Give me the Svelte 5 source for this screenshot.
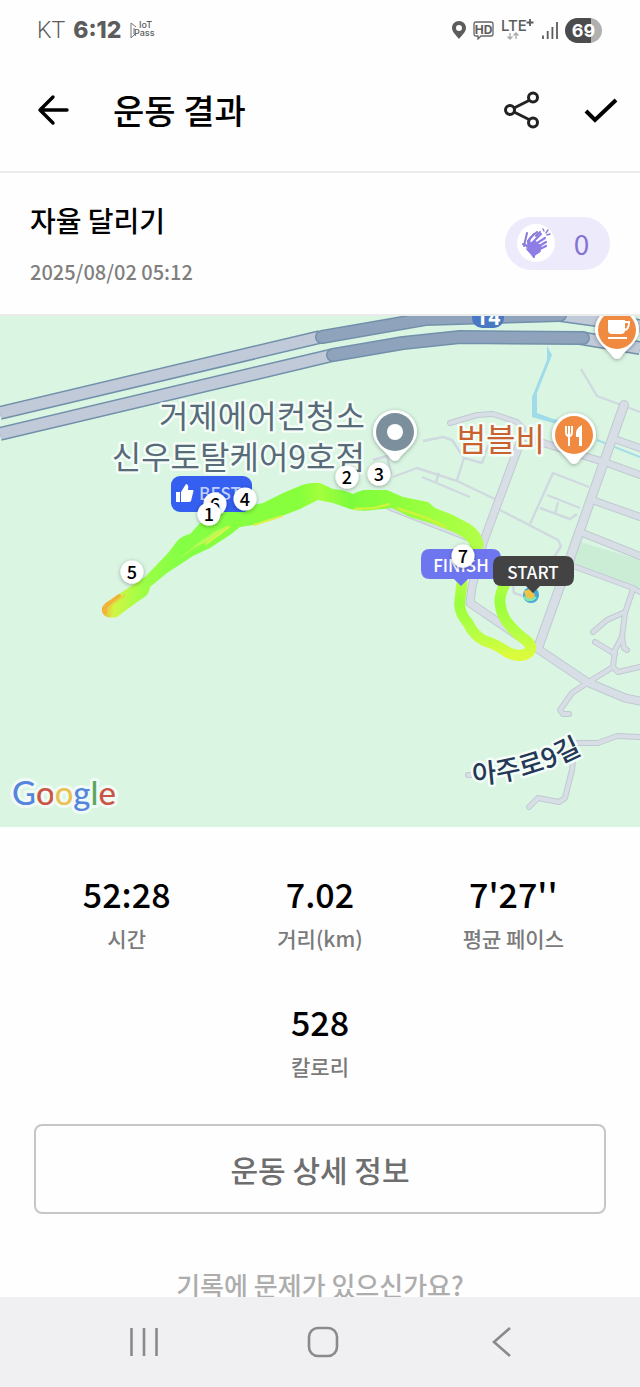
<script>
  const stats = [
    { value: '52:28', label: '시간' },
    { value: '7.02', label: '거리(km)' },
    { value: "7'27''", label: '평균 페이스' },
    { value: '528', label: '칼로리' }
  ];

  // kilometre markers, in drawing order
  const markers = [
    { km: 2, x: 347, y: 161 },
    { km: 3, x: 379, y: 158 },
    { km: 6, x: 215, y: 188 },
    { km: 4, x: 245, y: 183 },
    { km: 1, x: 209, y: 198 },
    { km: 5, x: 132, y: 256 },
    { km: 7, x: 463, y: 240 }
  ];

  const thin_roads = [
    'M581 53L597 80L640 96',
    'M423 125L443 121L452 124L464 142L457 164',
    'M464 142L482 147L488 130L506 133',
    'M393 161L417 152L457 165L497 184',
    'M422 161L470 181',
    'M439 157L436 166',
    'M373 144L387 140L391 158',
    'M500 194L558 224L561 230L553 243',
    'M530 208L553 157L589 171',
    'M547 179L580 192',
    'M558 186L555 198',
    'M540 192L570 203L577 198',
    'M513 270L514 277L523 280'
  ];

  const roads = [
    { d: 'M450 107L477 99L493 98L517 106L523 112L520 127', w: 5 },
    { d: 'M364 177L375 177', w: 5 },
    { d: 'M573 250L633 272L640 276', w: 5 },
    { d: 'M633 273L625 297L622 321L624 332L627 334', w: 5 },
    { d: 'M625 296L607 304L593 316', w: 5 },
    { d: 'M622 321L615 334L613 351L587 367L572 377L560 394L563 398L569 398', w: 5 },
    { d: 'M595 326L615 338', w: 5 },
    { d: 'M613 351L618 356L640 351', w: 5 },
    { d: 'M640 421L617 420L598 427L575 427L572 454L565 482L559 486L538 482L529 491', w: 5 },
    { d: 'M468 459L472 459', w: 5 },
    { d: 'M385 189L393 193L480 227', w: 5 },
    { d: 'M617 124L640 132', w: 7 },
    { d: 'M524 121L607 147L640 159', w: 7 },
    { d: 'M592 184L640 201', w: 7 },
    { d: 'M580 216L640 240', w: 7 },
    { d: 'M520 127L483 227L472 271L470 287L520 321L538 333L587 366L625 382L640 385', w: 8 },
    { d: 'M624 89L573 234L538 332', w: 9 }
  ];

  const highways = [
    { d: 'M0 97L320 21', dark: false },
    { d: 'M0 118L333 39', dark: false },
    { d: 'M560 -1L640 10', dark: false },
    { d: 'M580 22L640 32', dark: false },
    { d: 'M322 21L425 3L560 -1', dark: true },
    { d: 'M333 39L403 27L460 21L583 22', dark: true }
  ];

  const pin = 'M0 -22A22 22 0 0 1 22 0C22 12 8 20 4 27Q0 31 -4 27C-8 20 -22 12 -22 0A22 22 0 0 1 0 -22Z';

  let claps = $state(0);
</script>

<div class="screen">
  <div class="status">
    <span class="carrier">KT</span>
    <span class="clock">6:12</span>
    <svg class="iot" width="28" height="22" viewBox="0 0 28 22">
      <path d="M1 4V19L6 14M1 4L6 8M4 9V15" fill="none" stroke="#777" />
      <text x="9" y="9" font-size="9" font-weight="500">IoT</text>
      <text x="4" y="17" font-size="9" font-weight="500">Pass</text>
    </svg>

    <div class="status-right">
      <svg width="16" height="20" viewBox="0 0 16 20">
        <path fill-rule="evenodd" fill="#5c5c5c" d="M8 1C12 1 15 4 15 8C15 12 11 15 8 19C5 15 1 12 1 8C1 4 4 1 8 1ZM8 5A3 3 0 1 0 8 11A3 3 0 1 0 8 5Z" />
      </svg>
      <svg width="22" height="20" viewBox="0 0 22 20">
        <path d="M3 2H18Q20 2 20 4V14Q20 16 18 16H8L5 19V16H3Q1 16 1 14V4Q1 2 3 2Z" fill="none" stroke="#666" stroke-width="1.3" />
        <text x="10.500" y="13.500" text-anchor="middle" font-size="12" font-weight="700">HD</text>
      </svg>
      <svg width="34" height="24" viewBox="0 0 34 24">
        <text x="0" y="13" font-size="15" font-weight="500">LTE</text>
        <path d="M29 1V8M25.500 4.500H32.500" stroke="#5c5c5c" stroke-width="1.8" />
        <path d="M9 15V21M6.500 18.500L9 21L11.500 18.500M15 21V15M12.500 17.500L15 15L17.500 17.500" fill="none" stroke="#aaa" stroke-width="1.4" />
      </svg>
      <svg width="18" height="20" viewBox="0 0 18 20">
        <path d="M2 19V15.500M6.700 19V11M11.400 19V7M16 19V2" stroke="#5c5c5c" stroke-width="1.8" />
      </svg>
      <span class="battery">69</span>
    </div>
  </div>

  <header>
    <button class="icon" aria-label="뒤로">
      <svg width="36" height="36" viewBox="0 0 36 36">
        <path d="M32 18H5M18 5L5 18L18 31" fill="none" stroke="#000" stroke-width="3.4" stroke-linecap="round" stroke-linejoin="round" />
      </svg>
    </button>
    <h1>운동 결과</h1>
    <button class="icon" aria-label="공유">
      <svg width="40" height="40" viewBox="0 0 40 40">
        <g fill="none" stroke="#222" stroke-width="3">
          <path d="M29 10L13 18M13 22L29 30" />
          <circle cx="9" cy="20" r="4.500" />
          <circle cx="32" cy="7.500" r="4.500" />
          <circle cx="32" cy="32.500" r="4.500" />
        </g>
      </svg>
    </button>
    <button class="icon" aria-label="확인">
      <svg width="36" height="36" viewBox="0 0 36 36">
        <path d="M3 19L12 28L33 8" fill="none" stroke="#000" stroke-width="4" />
      </svg>
    </button>
  </header>

  <main>
    <section class="summary">
      <div>
        <h2>자율 달리기</h2>
        <time datetime="2025-08-02T05:12">2025/08/02 05:12</time>
      </div>
      <button class="clap" onclick={() => claps += 1}>
        <span class="hand">
          <svg width="32" height="32" viewBox="0 0 32 32" fill="none" stroke-linecap="round">
            <path d="M4 19L7 6M8 14L14 7M7 19L3 17M11 10L17 5M16 9L20 5" stroke="#8b78d8" stroke-width="2" />
            <path d="M9 15L10 11M11 17L21 7M14 18L25 11M16 21L26 15M18 23L26 19" stroke="#8f7de6" stroke-width="2.200" />
            <path d="M8 14L12 16L15 14L21 19L20 25L15 28L14 31L10 26L7 23Z" fill="#8f7de6" stroke="#8f7de6" />
            <path d="M24 4L23 2M26 6L28 3M27 8L30 7" stroke="#8b78d8" stroke-width="1.400" />
          </svg>
        </span>
        <span class="count">{claps}</span>
      </button>
    </section>

    <svg class="map" viewBox="0 0 640 511" role="img" aria-label="운동 경로 지도">
      <defs>
        <linearGradient id="loop" x1="0" y1="0" x2="0" y2="1">
          <stop offset="0" stop-color="#b4ff45" />
          <stop offset="0.300" stop-color="#9aff3d" />
          <stop offset="0.700" stop-color="#b5ff45" />
          <stop offset="1" stop-color="#dcfb3c" />
        </linearGradient>
        <linearGradient id="track" x1="0" y1="0" x2="1" y2="0">
          <stop offset="0" stop-color="#f2a83b" />
          <stop offset="0.030" stop-color="#d2f545" />
          <stop offset="0.110" stop-color="#9cff45" />
          <stop offset="0.200" stop-color="#85ff45" />
          <stop offset="0.520" stop-color="#88ff3c" />
          <stop offset="0.570" stop-color="#a4ff3c" />
          <stop offset="0.650" stop-color="#7dfc3c" />
          <stop offset="0.800" stop-color="#92ff3c" />
          <stop offset="1" stop-color="#b4ff48" />
        </linearGradient>
        <filter id="shadow" x="-30%" y="-30%" width="160%" height="170%">
          <feDropShadow dx="0" dy="1" stdDeviation="2" flood-opacity="0.35" />
        </filter>
      </defs>

      <rect width="640" height="511" fill="#daf6e3" />
      <path d="M577 225L640 244V272L573 248Z" fill="#cbedd6" />

      <path d="M547 30L552 39L537 77L537 97L553 103L566 105V108L553 107L532 101L532 81L547 44Z" fill="#9fdbe8" />
      <path d="M597 124L640 141" stroke="#a5dce8" stroke-width="2" />

      <g fill="none" stroke-linejoin="round">
        {#each thin_roads as d}
          <path {d} stroke="#d0d9df" stroke-width="2.400" />
        {/each}
        {#each roads as road}
          <path d={road.d} stroke="#c1c9d1" stroke-width={road.w + 1} stroke-linecap="round" />
        {/each}
        {#each roads as road}
          <path d={road.d} stroke="#d8dee6" stroke-width={road.w - 1} stroke-linecap="round" />
        {/each}
        {#each highways as road}
          <path d={road.d} stroke="#7290ab" stroke-width="14" stroke-linecap={road.dark ? 'round' : 'butt'} />
          <path d={road.d} stroke={road.dark ? '#90a3bd' : '#c1cad9'} stroke-width="11" stroke-linecap={road.dark ? 'round' : 'butt'} />
        {/each}
      </g>

      <rect x="472" y="-14" width="32" height="26" rx="10" fill="#4a79c4" />
      <text class="shield" x="488" y="9">14</text>

      <!-- running route -->
      <path d="M507 264Q499 278 500 287Q501 300 511 311Q518 319 527 325Q533 331 529 336Q521 343 507 336Q496 328 485 325Q474 320 468 307Q458 296 460 284L462 266" fill="none" stroke="url(#loop)" stroke-width="11" stroke-linecap="round" stroke-linejoin="round" />
      <path fill="url(#track)" d="M102 292Q104 287 110 284L122 276L145 261L168 237L178 224Q184 219 190 218L200 207L223 196L263 187L283 177L302 169Q312 166 320 167L333 173Q345 174 353 178Q363 173 373 174H387L403 181L428 186L435 192L453 199L470 208Q481 215 484 228L482 236H472L469 227Q463 220 453 216L433 208L410 201L392 192L373 194Q361 196 350 193L333 187L318 184L300 193L277 202L253 209L240 211L230 219L210 232L193 240L167 257L150 271Q149 279 143 282L133 289L117 301Q110 302 107 301Q101 298 102 292Z" />
      <path d="M176 245L194 232L220 219L229 209L214 216L197 228Z" fill="#bdf953" />
      <path d="M206 228L229 211M254 209L282 200" stroke="#dcf24a" stroke-width="2" stroke-linecap="round" />
      <path d="M354 193L374 192L390 188M397 192L424 201L446 211" fill="none" stroke="#cbf53c" stroke-width="2.500" />
      <path d="M105 296Q104 290 111 286L119 280" fill="none" stroke="#f1b33c" stroke-width="4" stroke-linecap="round" />
      <path d="M109 299Q108 292 114 287L125 279" fill="none" stroke="#e0dc3c" stroke-width="2" />

      <circle cx="531" cy="279" r="8" fill="#45a5d8" />
      <path d="M524 275L530 273L535 279L532 285Q525 283 524 275Z" fill="#eec445" />
      <path d="M524 281Q530 287 536 281" fill="none" stroke="#83e8b0" stroke-width="2.500" />

      <g class="place gray">
        <text x="365" y="112">거제에어컨청소</text>
        <text x="365" y="153">신우토탈케어9호점</text>
      </g>
      <g class="place orange">
        <text x="545" y="135">범블비</text>
      </g>
      <path id="street" d="M473 468Q530 466 590 433" fill="none" />
      <text class="street"><textPath href="#street">아주로9길</textPath></text>

      <g transform="translate(395 116)">
        <path d={pin} fill="#fff" filter="url(#shadow)" />
        <circle r="19" fill="#7b8f9c" />
        <circle r="8" fill="#fff" />
      </g>
      <g transform="translate(574 119)">
        <path d={pin} fill="#fff" filter="url(#shadow)" />
        <circle r="19" fill="#f08a40" />
        <path d="M-8 -9V-3Q-8 1 -5 1V11M-5 -9V1M-2 -9V-3Q-2 1 -5 1" fill="none" stroke="#fff" stroke-width="2" />
        <path d="M8 -10V11H5V2H2Q1 -7 8 -10Z" fill="#fff" />
      </g>
      <g transform="translate(617 14)">
        <path d={pin} fill="#fff" filter="url(#shadow)" />
        <circle r="19" fill="#f08a40" />
        <path d="M-9 -10H8V0Q8 4 4 4H-5Q-9 4 -9 0Z" fill="#fff" />
        <path d="M8 -8H12Q12 -1 8 0M-9 8H10" fill="none" stroke="#fff" stroke-width="2" />
      </g>

      <g transform="translate(171 160)">
        <rect width="81" height="36" rx="9" fill="#345ff0" />
        <path d="M5 16H9V26H5ZM10 16L15 8Q18 8 17 14H22Q23 15 22 17L20 25Q19 26 18 26H10Z" fill="#fff" />
        <text class="tag best" x="49" y="24">BEST</text>
      </g>
      <g transform="translate(421 233)">
        <path d="M9 0H71Q80 0 80 9V21Q80 30 71 30H47L40 37L33 30H9Q0 30 0 21V9Q0 0 9 0Z" fill="#6e76ef" />
        <text class="tag" x="40" y="23">FINISH</text>
      </g>
      <g transform="translate(493 240)">
        <path d="M9 0H72Q81 0 81 9V21Q81 30 72 30H47L40 37L33 30H9Q0 30 0 21V9Q0 0 9 0Z" fill="#434343" />
        <text class="tag" x="40" y="23">START</text>
      </g>

      {#each markers as marker}
        <circle cx={marker.x} cy={marker.y} r="11.500" fill="#fff" filter="url(#shadow)" />
        <text class="km" x={marker.x} y={marker.y + 7}>{marker.km}</text>
      {/each}

      <text class="google" x="12" y="489"><tspan fill="#5685dd">G</tspan><tspan fill="#ca5546">o</tspan><tspan fill="#ebc152">o</tspan><tspan fill="#5685dd">g</tspan><tspan fill="#5da765">l</tspan><tspan fill="#ca5546">e</tspan></text>
    </svg>

    <dl class="stats">
      {#each stats as stat}
        <div>
          <dt>{stat.label}</dt>
          <dd>{stat.value}</dd>
        </div>
      {/each}
    </dl>

    <div class="actions">
      <button class="detail">운동 상세 정보</button>
      <a href="#help">기록에 문제가 있으신가요?</a>
    </div>
  </main>

  <nav>
    <button aria-label="최근 앱">
      <svg width="36" height="36" viewBox="0 0 36 36">
        <path d="M5.500 4V32M18 4V32M30.500 4V32" stroke="#8a8a8a" stroke-width="2.600" />
      </svg>
    </button>
    <button aria-label="홈">
      <svg width="36" height="36" viewBox="0 0 36 36">
        <rect x="4" y="4" width="28" height="28" rx="9" fill="none" stroke="#8a8a8a" stroke-width="2.600" />
      </svg>
    </button>
    <button aria-label="뒤로 가기">
      <svg width="36" height="36" viewBox="0 0 36 36">
        <path d="M26 4L10 18L26 32" fill="none" stroke="#8a8a8a" stroke-width="2.600" />
      </svg>
    </button>
  </nav>
</div>

<style>
  :global(body) {
    margin: 0;
    background: #fefefe;
  }

  .screen {
    display: flex;
    flex-direction: column;
    height: 100vh;
    overflow: hidden;
    font-family: "Noto Sans CJK KR", sans-serif;
    color: #000;
  }

  button {
    padding: 0;
    border: 0;
    background: none;
    font: inherit;
    color: inherit;
    cursor: pointer;
  }

  svg {
    display: block;
  }

  h1, h2, dl, dd {
    margin: 0;
    font-weight: 500;
  }

  .status {
    display: flex;
    align-items: center;
    flex: none;
    height: 60px;
    padding: 0 38px 0 37px;
    font-family: Inter, sans-serif;
    color: #5c5c5c;
  }

  .status text {
    fill: #5c5c5c;
  }

  .carrier {
    margin-right: 8px;
    font-family: Roboto, sans-serif;
    font-size: 23px;
    font-weight: 300;
  }

  .clock {
    margin-right: 9px;
    font-size: 23px;
    font-weight: 800;
  }

  .status-right {
    display: flex;
    align-items: center;
    gap: 6px;
    margin-left: auto;
  }

  .battery {
    width: 37px;
    border-radius: 13px;
    background: linear-gradient(90deg, #4c4c4c 69%, #b0b0b0 69%);
    font-size: 18px;
    font-weight: 700;
    line-height: 25px;
    text-align: center;
    color: #fff;
  }

  header {
    display: flex;
    align-items: center;
    gap: 42px;
    flex: none;
    height: 100px;
    padding: 0 21px 11px 35px;
    border-bottom: 2px solid #ebebeb;
  }

  h1 {
    flex: 1;
    font-size: 34px;
    line-height: 48px;
  }

  main {
    flex: 1;
    min-height: 0;
    overflow: hidden;
  }

  .summary {
    display: flex;
    align-items: center;
    justify-content: space-between;
    padding: 25px 30px 26px;
    border-bottom: 2px solid #e9ecea;
  }

  h2 {
    font-size: 28px;
    line-height: 44px;
  }

  time {
    display: block;
    margin-top: 14px;
    font-size: 20px;
    font-weight: 500;
    line-height: 32px;
    color: #7f7f7f;
  }

  .clap {
    display: flex;
    align-items: center;
    width: 105px;
    height: 53px;
    padding-left: 12px;
    border-radius: 27px;
    background: #edeafb;
  }

  .hand {
    display: flex;
    align-items: center;
    justify-content: center;
    width: 38px;
    height: 38px;
    border-radius: 50%;
    background: #fff;
  }

  .count {
    flex: 1;
    padding-right: 2px;
    font-size: 28px;
    line-height: 50px;
    color: #8573d3;
  }

  .map {
    width: 100%;
    height: auto;
  }

  .map text {
    text-anchor: middle;
    font-weight: 500;
  }

  .place {
    font-size: 32px;
    stroke: #f4fdf7;
    stroke-width: 5px;
    stroke-linejoin: round;
    paint-order: stroke;
  }

  .map .place text {
    font-weight: 400;
    text-anchor: end;
  }

  .gray {
    fill: #576b78;
  }

  .orange {
    fill: #c9622f;
  }

  .map .street {
    font-size: 27px;
    text-anchor: start;
    fill: #243858;
    stroke: #f4fdf7;
    stroke-width: 5px;
    stroke-linejoin: round;
    paint-order: stroke;
  }

  .map .shield {
    font-family: Roboto, sans-serif;
    font-size: 22px;
    font-weight: 700;
    fill: #fff;
  }

  .tag {
    font-size: 17px;
    fill: #fff;
  }

  .best {
    fill: #c3d0ff;
  }

  .km {
    font-size: 18px;
  }

  .map .google {
    font-family: Lato, sans-serif;
    font-size: 33px;
    text-anchor: start;
    stroke: #f1fbf5;
    stroke-width: 6px;
    stroke-linejoin: round;
    paint-order: stroke;
  }

  .stats {
    display: flex;
    flex-wrap: wrap;
    justify-content: center;
    row-gap: 44px;
    padding: 43px 30px 42px;
  }

  .stats div {
    display: flex;
    flex-direction: column-reverse;
    width: 33.33%;
    text-align: center;
  }

  dt {
    font-size: 21px;
    line-height: 32px;
    color: #7a7a7a;
  }

  dd {
    margin-bottom: 4px;
    font-size: 34px;
    line-height: 48px;
  }

  .actions {
    display: flex;
    flex-direction: column;
    gap: 52px;
    padding: 0 34px;
  }

  .detail {
    height: 90px;
    border: 2px solid #c6c6c6;
    border-radius: 8px;
    font-size: 30px;
    font-weight: 500;
    line-height: 44px;
    color: #6e6e6e;
  }

  a {
    font-size: 26px;
    font-weight: 500;
    line-height: 38px;
    text-align: center;
    text-decoration: none;
    color: #adadad;
  }

  nav {
    display: grid;
    grid-template-columns: repeat(3, 1fr);
    flex: none;
    height: 90px;
    padding: 0 48px 0 54px;
    background: #f0f0f3;
  }

  nav button {
    display: flex;
    align-items: center;
    justify-content: center;
  }
</style>
